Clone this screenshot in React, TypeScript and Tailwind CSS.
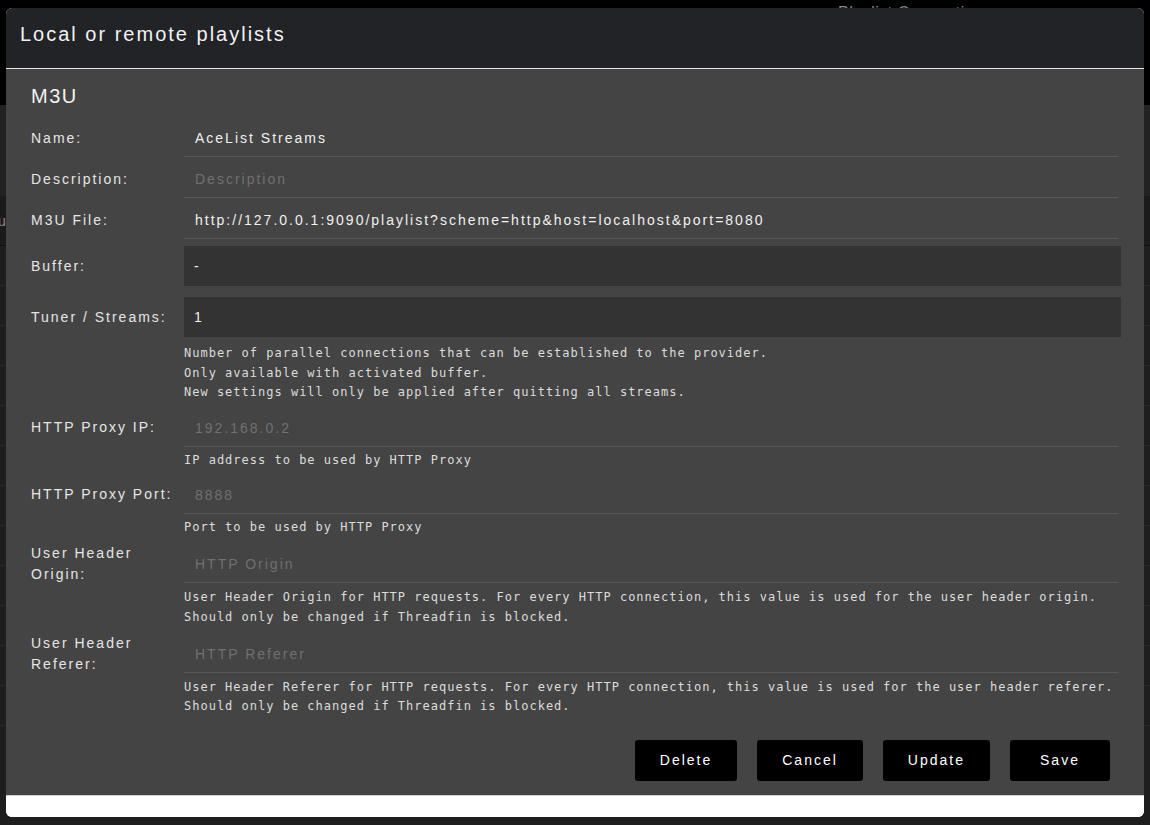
import React from "react";

type Field = {
  label: string;
  value?: string;
  placeholder?: string;
};

const fields: Field[] = [
  { label: "Name:", value: "AceList Streams" },
  { label: "Description:", placeholder: "Description" },
  {
    label: "M3U File:",
    value: "http://127.0.0.1:9090/playlist?scheme=http&host=localhost&port=8080",
  },
];

const sans = { fontFamily: '"Liberation Sans", Arial, sans-serif' };

const Label = ({ children }: { children: React.ReactNode }) => (
  <div className="w-[153px] shrink-0 h-[41px] pt-[3px] flex items-center text-[14px] leading-[21px] tracking-[2px] text-[#e6e6e6] pr-2">
    {children}
  </div>
);

// label next to the dark select / number boxes
const BoxLabel = ({ children }: { children: React.ReactNode }) => (
  <div className="w-[153px] shrink-0 h-10 flex items-center text-[14px] tracking-[2px] text-[#e6e6e6]">
    {children}
  </div>
);

const LineInput = ({ value, placeholder }: { value?: string; placeholder?: string }) => (
  <div className="w-full h-[41px] shrink-0 border-b border-[#575757] flex items-center pl-[11px] pt-[5px] text-[14px] tracking-[2px]">
    {value ? (
      <span className="text-[#f0f0f0]">{value}</span>
    ) : (
      <span className="text-[#707070]">{placeholder}</span>
    )}
  </div>
);

const Hint = ({ lines, lh = "leading-[19.5px]" }: { lines: string[]; lh?: string }) => (
  <div
    className={`text-[12px] ${lh} tracking-[1px] text-[#dcdcdc] whitespace-pre`}
    style={{ fontFamily: '"DejaVu Sans Mono", monospace' }}
  >
    {lines.map((l) => (
      <div key={l}>{l}</div>
    ))}
  </div>
);

const Button = ({ children }: { children: React.ReactNode }) => (
  <button className="h-[41px] min-w-[100px] px-[25px] bg-black text-white text-[14px] tracking-[2px] rounded-[3px]">
    {children}
  </button>
);

function Background() {
  return (
    <div className="h-[825px] bg-[#1e1e1e] flex flex-col">
      <div className="h-[105px] bg-black pl-[838px] pt-[1px] text-[16px] tracking-[0.5px] text-[#8a8a8a]">
        Playlist Connections:
      </div>
      <div className="h-[92px] bg-[#222222] border-b border-[#1a1a1a]" />
      <div className="h-[49px] bg-[#1b1b1b] border-b border-[#0e0e0e] flex items-center text-[14px] text-[#888] -ml-[10px]">
        Tuner
      </div>
      {[0, 1, 2, 3, 4, 5, 6, 7, 8, 9, 10, 11].map((i) => (
        <div key={i} className="h-[40px] border-b border-[#2a2a2a]" />
      ))}
    </div>
  );
}

export default function App() {
  return (
    <div className="relative w-[1150px] h-[825px] overflow-hidden" style={sans}>
      <Background />
      <div className="absolute left-[6px] top-[8px] w-[1138px] h-[809px] rounded-[6px] overflow-hidden flex flex-col bg-white">
        <div className="h-[61px] shrink-0 bg-[#212327] border-b border-[#e8e8e8] pl-[14px] pt-[15px] leading-[23px] text-[20px] tracking-[2px] text-[#f2f2f2]">
          Local or remote playlists
        </div>
        <div className="h-[726px] shrink-0 bg-[#444444] pl-[25px] pr-[23px] pt-[15px] flex flex-col">
          <div className="h-[24px] leading-[24px] text-[20px] tracking-[1.5px] text-[#f2f2f2] mb-[8px]">
            M3U
          </div>
          {fields.map((f) => (
            <div key={f.label} className="flex">
              <Label>{f.label}</Label>
              <div className="flex-1 pr-[3px]">
                <LineInput value={f.value} placeholder={f.placeholder} />
              </div>
            </div>
          ))}
          <div className="flex mt-[7px]">
            <BoxLabel>Buffer:</BoxLabel>
            <div className="flex-1 h-10 bg-[#333333] flex items-center pl-[10px] text-[14px] tracking-[2px] text-[#f0f0f0]">
              -
            </div>
          </div>
          <div className="flex mt-[11px]">
            <BoxLabel>Tuner / Streams:</BoxLabel>
            <div className="flex-1 flex flex-col">
              <div className="h-10 bg-[#333333] flex items-center pl-[10px] text-[14px] tracking-[2px] text-[#f0f0f0]">
                1
              </div>
              <div className="mt-[7px]">
                <Hint
                  lines={[
                    "Number of parallel connections that can be established to the provider.",
                    "Only available with activated buffer.",
                    "New settings will only be applied after quitting all streams.",
                  ]}
                />
              </div>
            </div>
          </div>
          <div className="flex mt-[3px]">
            <Label>HTTP Proxy IP:</Label>
            <div className="flex-1 flex flex-col pr-[3px]">
              <LineInput placeholder="192.168.0.2" />
              <div className="mt-[3px]">
                <Hint lines={["IP address to be used by HTTP Proxy"]} lh="leading-[20px]" />
              </div>
            </div>
          </div>
          <div className="flex mt-[3px]">
            <Label>HTTP Proxy Port:</Label>
            <div className="flex-1 flex flex-col pr-[3px]">
              <LineInput placeholder="8888" />
              <div className="mt-[3px]">
                <Hint lines={["Port to be used by HTTP Proxy"]} lh="leading-[20px]" />
              </div>
            </div>
          </div>
          <div className="flex mt-[5px]">
            <Label>
              User Header
              <br />
              Origin:
            </Label>
            <div className="flex-1 flex flex-col pr-[3px]">
              <LineInput placeholder="HTTP Origin" />
              <div className="mt-[4px]">
                <Hint
                  lh="leading-[20px]"
                  lines={[
                    "User Header Origin for HTTP requests. For every HTTP connection, this value is used for the user header origin.",
                    "Should only be changed if Threadfin is blocked.",
                  ]}
                />
              </div>
            </div>
          </div>
          <div className="flex mt-[5px]">
            <Label>
              User Header
              <br />
              Referer:
            </Label>
            <div className="flex-1 flex flex-col pr-[3px]">
              <LineInput placeholder="HTTP Referer" />
              <div className="mt-[5px]">
                <Hint
                  lh="leading-[19.5px]"
                  lines={[
                    "User Header Referer for HTTP requests. For every HTTP connection, this value is used for the user header referer.",
                    "Should only be changed if Threadfin is blocked.",
                  ]}
                />
              </div>
            </div>
          </div>
          <div className="flex justify-end gap-[20px] mt-[23px] pr-[11px]">
            <Button>Delete</Button>
            <Button>Cancel</Button>
            <Button>Update</Button>
            <Button>Save</Button>
          </div>
        </div>
        <div className="flex-1 bg-white border-t border-[#d0d0d0]" />
      </div>
    </div>
  );
}
